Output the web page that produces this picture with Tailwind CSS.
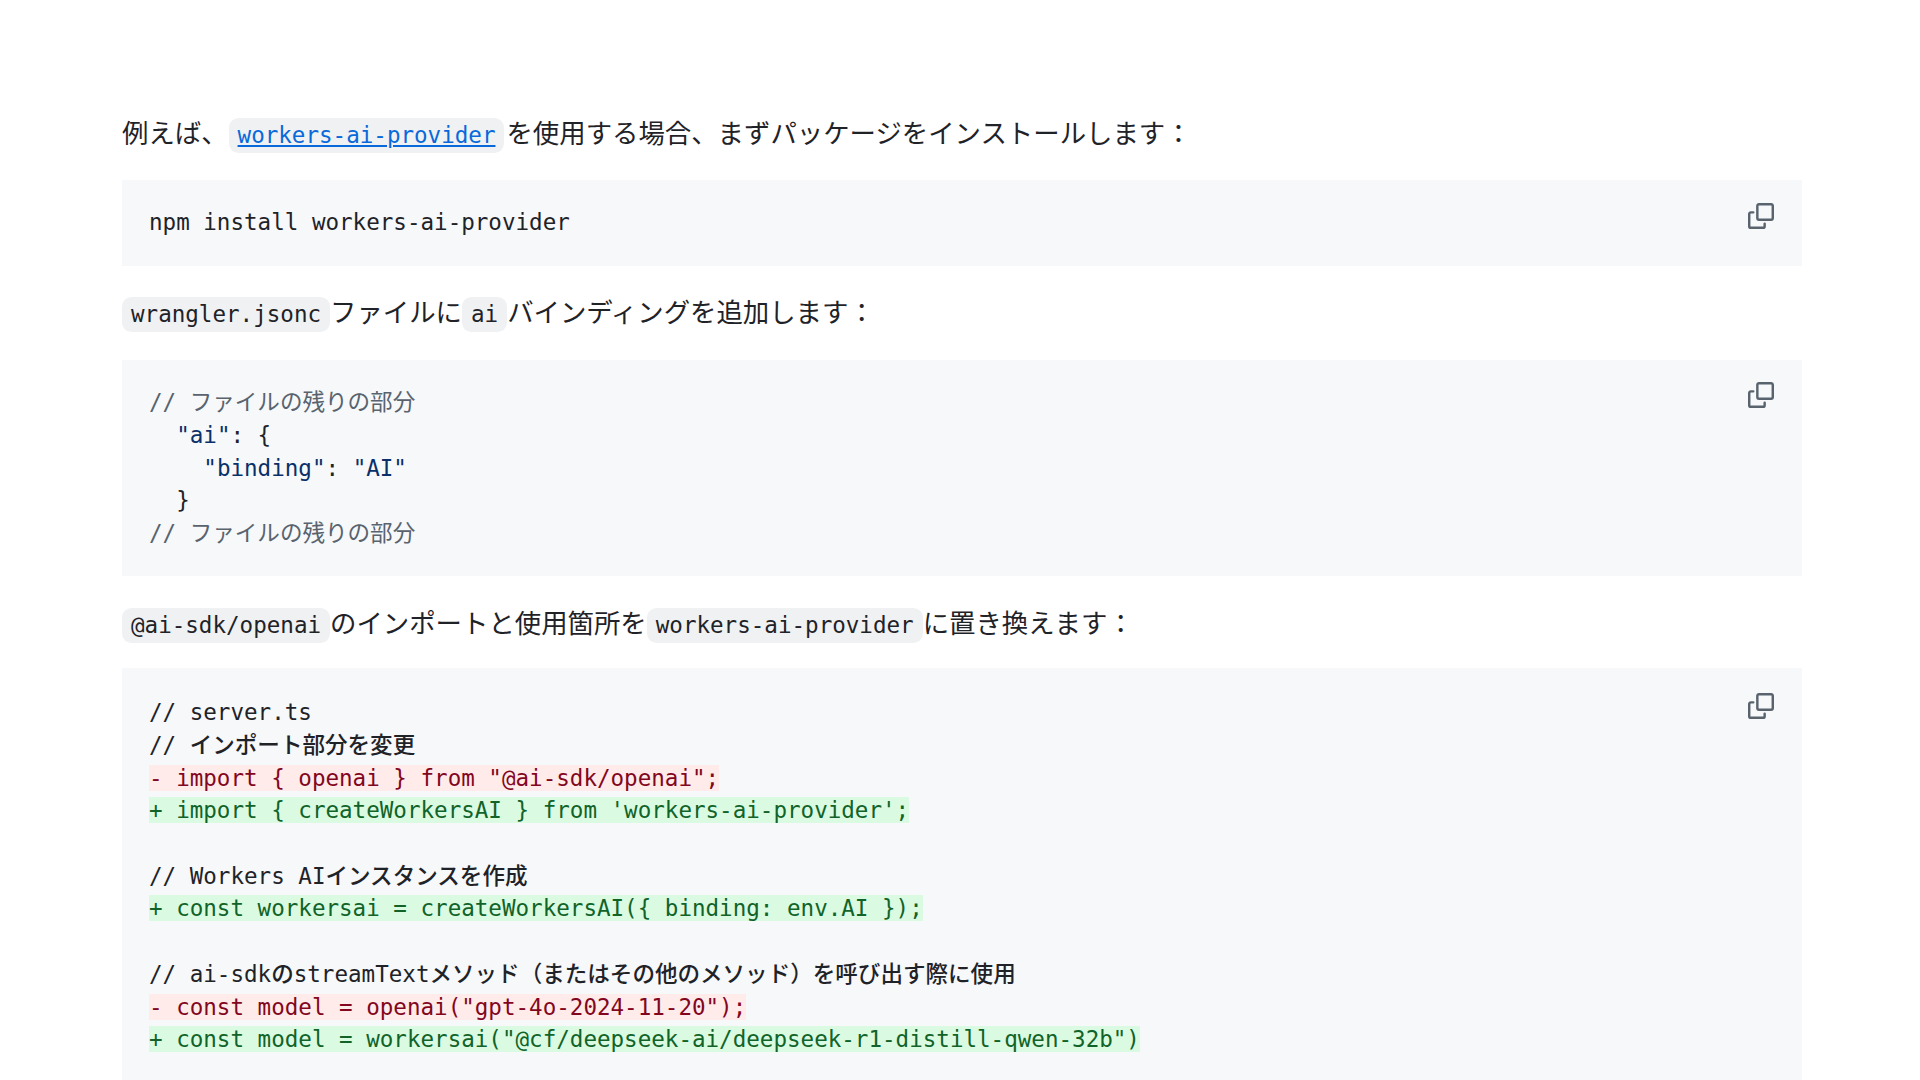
<!DOCTYPE html>
<html lang="ja">
<head>
  <meta charset="UTF-8">
  <title>workers-ai-provider</title>
  <script src="https://cdn.jsdelivr.net/npm/@tailwindcss/browser@4"></script>
</head>
<body class="bg-white text-[#1f2328] h-[1080px] overflow-hidden font-['Noto_Sans_CJK_JP',sans-serif]">
  <main class="pl-[122px] pr-[118px] pt-[118px]">
    <p class="text-[26.4px] leading-[27px] whitespace-pre">例えば、<a class="inline-block align-top h-[35px] leading-[35px] ml-[1px] mr-[2px] px-[9px] rounded-[9.6px] bg-[#eff1f3] text-[22.56px] text-[#0969da] underline font-['DejaVu_Sans_Mono','Noto_Sans_CJK_JP',monospace]">workers-ai-provider</a>を使用する場合、まずパッケージをインストールします：</p>

    <div class="relative mt-[27px] px-[27px] pt-[26px] pb-[27px] bg-[#f6f8fa] text-[22.56px] leading-[32.7px] whitespace-pre font-['DejaVu_Sans_Mono','Noto_Sans_CJK_JP',monospace]">npm install workers-ai-provider<svg class="absolute top-[23px] right-[28px] w-[26px] h-[26px] fill-[#59636e]" viewBox="0 0 16 16"><path d="M0 6.75C0 5.784.784 5 1.75 5h1.5a.75.75 0 0 1 0 1.5h-1.5a.25.25 0 0 0-.25.25v7.5c0 .138.112.25.25.25h7.5a.25.25 0 0 0 .25-.25v-1.5a.75.75 0 0 1 1.5 0v1.5A1.75 1.75 0 0 1 9.25 16h-7.5A1.75 1.75 0 0 1 0 14.25Z"/><path d="M5 1.75C5 .784 5.784 0 6.75 0h7.5C15.216 0 16 .784 16 1.75v7.5A1.75 1.75 0 0 1 14.25 11h-7.5A1.75 1.75 0 0 1 5 9.25Zm1.75-.25a.25.25 0 0 0-.25.25v7.5c0 .138.112.25.25.25h7.5a.25.25 0 0 0 .25-.25v-7.5a.25.25 0 0 0-.25-.25Z"/></svg></div>

    <p class="mt-[31px] text-[26.4px] leading-[27px] whitespace-pre"><code class="inline-block align-top h-[35px] leading-[35px] px-[9px] rounded-[9.6px] bg-[#eff1f3] text-[22.56px] font-['DejaVu_Sans_Mono','Noto_Sans_CJK_JP',monospace]">wrangler.jsonc</code>ファイルに<code class="inline-block align-top h-[35px] leading-[35px] px-[9px] rounded-[9.6px] bg-[#eff1f3] text-[22.56px] font-['DejaVu_Sans_Mono','Noto_Sans_CJK_JP',monospace]">ai</code>バインディングを追加します：</p>

    <div class="relative mt-[28px] px-[27px] py-[26.5px] bg-[#f6f8fa] text-[22.56px] leading-[32.7px] whitespace-pre font-['DejaVu_Sans_Mono','Noto_Sans_CJK_JP',monospace]"><span class="text-[#59636e]">// ファイルの残りの部分</span>
  <span class="text-[#0a3069]">"ai"</span>: {
    <span class="text-[#0a3069]">"binding"</span>: <span class="text-[#0a3069]">"AI"</span>
  }
<span class="text-[#59636e]">// ファイルの残りの部分</span><svg class="absolute top-[22px] right-[28px] w-[26px] h-[26px] fill-[#59636e]" viewBox="0 0 16 16"><path d="M0 6.75C0 5.784.784 5 1.75 5h1.5a.75.75 0 0 1 0 1.5h-1.5a.25.25 0 0 0-.25.25v7.5c0 .138.112.25.25.25h7.5a.25.25 0 0 0 .25-.25v-1.5a.75.75 0 0 1 1.5 0v1.5A1.75 1.75 0 0 1 9.25 16h-7.5A1.75 1.75 0 0 1 0 14.25Z"/><path d="M5 1.75C5 .784 5.784 0 6.75 0h7.5C15.216 0 16 .784 16 1.75v7.5A1.75 1.75 0 0 1 14.25 11h-7.5A1.75 1.75 0 0 1 5 9.25Zm1.75-.25a.25.25 0 0 0-.25.25v7.5c0 .138.112.25.25.25h7.5a.25.25 0 0 0 .25-.25v-7.5a.25.25 0 0 0-.25-.25Z"/></svg></div>

    <p class="mt-[32px] text-[26.4px] leading-[27px] whitespace-pre"><code class="inline-block align-top h-[35px] leading-[35px] px-[9px] rounded-[9.6px] bg-[#eff1f3] text-[22.56px] font-['DejaVu_Sans_Mono','Noto_Sans_CJK_JP',monospace]">@ai-sdk/openai</code>のインポートと使用箇所を<code class="inline-block align-top h-[35px] leading-[35px] px-[9px] rounded-[9.6px] bg-[#eff1f3] text-[22.56px] font-['DejaVu_Sans_Mono','Noto_Sans_CJK_JP',monospace]">workers-ai-provider</code>に置き換えます：</p>

    <div class="relative mt-[25px] px-[27px] pt-[28px] pb-[26px] bg-[#f6f8fa] text-[22.56px] leading-[32.7px] whitespace-pre font-['DejaVu_Sans_Mono','Noto_Sans_CJK_JP',monospace]">// server.ts
<span class="font-medium">// インポート部分を変更</span>
<span class="bg-[#ffebe9] text-[#82071e]">- import { openai } from "@ai-sdk/openai";</span>
<span class="bg-[#dafbe1] text-[#116329]">+ import { createWorkersAI } from 'workers-ai-provider';</span>

<span class="font-medium">// Workers AIインスタンスを作成</span>
<span class="bg-[#dafbe1] text-[#116329]">+ const workersai = createWorkersAI({ binding: env.AI });</span>

<span class="font-medium">// ai-sdkのstreamTextメソッド（またはその他のメソッド）を呼び出す際に使用</span>
<span class="bg-[#ffebe9] text-[#82071e]">- const model = openai("gpt-4o-2024-11-20");</span>
<span class="bg-[#dafbe1] text-[#116329]">+ const model = workersai("@cf/deepseek-ai/deepseek-r1-distill-qwen-32b")</span><svg class="absolute top-[25px] right-[28px] w-[26px] h-[26px] fill-[#59636e]" viewBox="0 0 16 16"><path d="M0 6.75C0 5.784.784 5 1.75 5h1.5a.75.75 0 0 1 0 1.5h-1.5a.25.25 0 0 0-.25.25v7.5c0 .138.112.25.25.25h7.5a.25.25 0 0 0 .25-.25v-1.5a.75.75 0 0 1 1.5 0v1.5A1.75 1.75 0 0 1 9.25 16h-7.5A1.75 1.75 0 0 1 0 14.25Z"/><path d="M5 1.75C5 .784 5.784 0 6.75 0h7.5C15.216 0 16 .784 16 1.75v7.5A1.75 1.75 0 0 1 14.25 11h-7.5A1.75 1.75 0 0 1 5 9.25Zm1.75-.25a.25.25 0 0 0-.25.25v7.5c0 .138.112.25.25.25h7.5a.25.25 0 0 0 .25-.25v-7.5a.25.25 0 0 0-.25-.25Z"/></svg></div>
  </main>
</body>
</html>
